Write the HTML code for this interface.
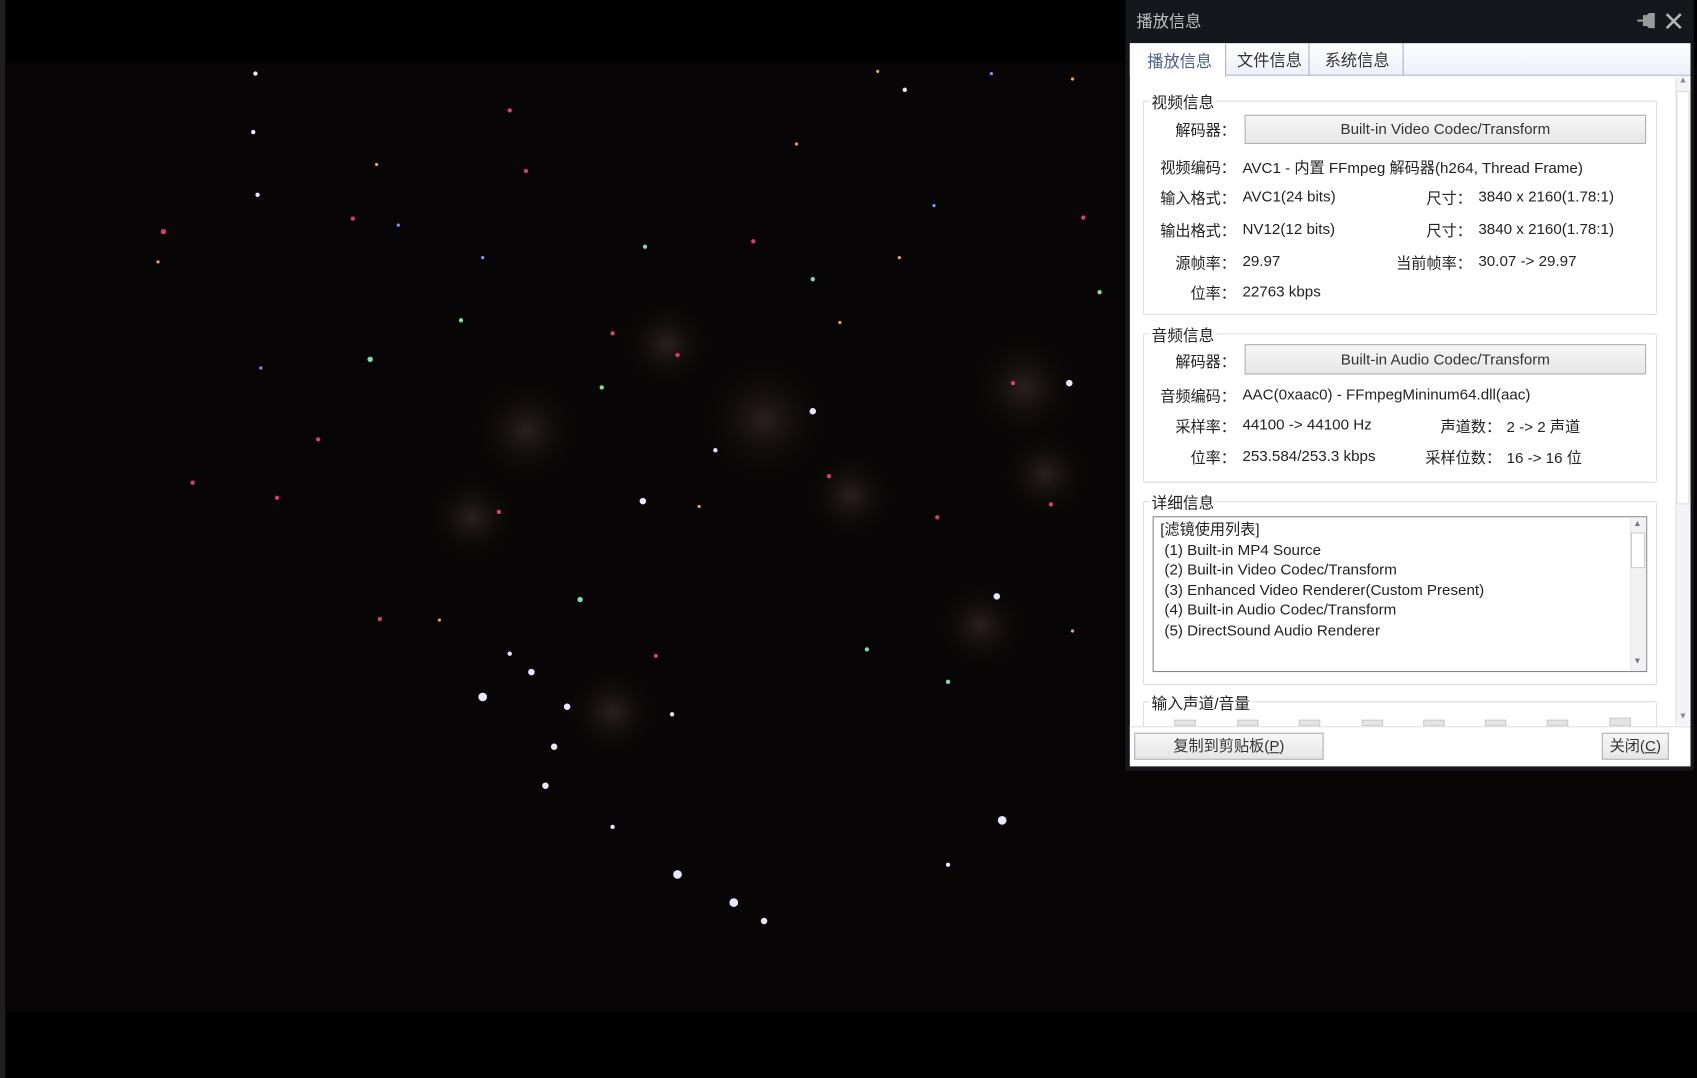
<!DOCTYPE html>
<html><head><meta charset="utf-8"><style>
*{margin:0;padding:0;box-sizing:border-box}
html,body{width:1697px;height:1078px;overflow:hidden;background:#000}
#w{position:absolute;left:0;top:0;width:1568px;height:996px;transform:scale(1.08227);transform-origin:0 0;font-family:"Liberation Sans","Noto Sans CJK SC",sans-serif;font-size:14px;color:#222}
.a{position:absolute;white-space:nowrap}
.r{text-align:right}
.grp{position:absolute;border:1px solid #dcdcdc;border-radius:2px}
.gl{position:absolute;background:#fff;padding:0 2px;font-size:14.5px;color:#222}
.btn{position:absolute;border:1px solid #adadad;background:linear-gradient(#f7f7f7,#e6e6e6);text-align:center;color:#333}
</style></head><body><div id="w">
<div class="a" style="left:0;top:0;width:5px;height:996px;background:#1e1e1e"></div>
<div class="a" style="left:6px;top:58px;width:1562px;height:877px;background:#070505"></div>
<svg class="a" style="left:6px;top:58px" width="1562" height="877">
<defs><radialGradient id="s"><stop offset="0" stop-color="#3a2a2a" stop-opacity=".7"/><stop offset="1" stop-color="#000" stop-opacity="0"/></radialGradient></defs>
<g fill="url(#s)"><circle cx="480" cy="340" r="60"/><circle cx="700" cy="330" r="70"/><circle cx="780" cy="400" r="50"/><circle cx="940" cy="300" r="60"/><circle cx="610" cy="260" r="50"/><circle cx="430" cy="420" r="50"/><circle cx="960" cy="380" r="50"/><circle cx="560" cy="600" r="50"/><circle cx="900" cy="520" r="50"/></g>
<g fill="#d04070"><circle cx="145" cy="156" r="2.5"/><circle cx="465" cy="44" r="2"/><circle cx="480" cy="100" r="2"/><circle cx="320" cy="144" r="2"/><circle cx="690" cy="165" r="2"/><circle cx="620" cy="270" r="2"/><circle cx="560" cy="250" r="2"/><circle cx="250" cy="402" r="2"/><circle cx="455" cy="415" r="2"/><circle cx="760" cy="382" r="2"/><circle cx="965" cy="408" r="2"/><circle cx="995" cy="143" r="2"/><circle cx="345" cy="514" r="2"/><circle cx="600" cy="548" r="2"/><circle cx="930" cy="296" r="2"/><circle cx="172" cy="388" r="2"/><circle cx="860" cy="420" r="2"/><circle cx="288" cy="348" r="2"/></g>
<g fill="#7fe0a0"><circle cx="336" cy="274" r="2.5"/><circle cx="590" cy="170" r="2"/><circle cx="745" cy="200" r="2"/><circle cx="530" cy="496" r="2.5"/><circle cx="870" cy="572" r="2"/><circle cx="795" cy="542" r="2"/><circle cx="550" cy="300" r="2"/><circle cx="1010" cy="212" r="2"/><circle cx="420" cy="238" r="2"/></g>
<g fill="#e8e8ff"><circle cx="982" cy="296" r="3"/><circle cx="745" cy="322" r="3"/><circle cx="588" cy="405" r="3"/><circle cx="440" cy="586" r="4"/><circle cx="485" cy="563" r="3"/><circle cx="518" cy="595" r="3"/><circle cx="506" cy="632" r="3"/><circle cx="498" cy="668" r="3"/><circle cx="620" cy="750" r="4"/><circle cx="672" cy="776" r="4"/><circle cx="700" cy="793" r="3"/><circle cx="920" cy="700" r="4"/><circle cx="870" cy="741" r="2"/><circle cx="655" cy="358" r="2"/><circle cx="915" cy="493" r="3"/><circle cx="228" cy="64" r="2"/><circle cx="232" cy="122" r="2"/><circle cx="615" cy="602" r="2"/><circle cx="560" cy="706" r="2"/><circle cx="230" cy="10" r="2"/><circle cx="830" cy="25" r="2"/><circle cx="465" cy="546" r="2"/></g>
<g fill="#e8a060"><circle cx="342" cy="94" r="1.5"/><circle cx="730" cy="75" r="1.5"/><circle cx="825" cy="180" r="1.5"/><circle cx="770" cy="240" r="1.5"/><circle cx="640" cy="410" r="1.5"/><circle cx="400" cy="515" r="1.5"/><circle cx="985" cy="525" r="1.5"/><circle cx="140" cy="184" r="1.5"/><circle cx="805" cy="8" r="1.5"/><circle cx="985" cy="15" r="1.5"/></g>
<g fill="#8090ff"><circle cx="235" cy="282" r="1.5"/><circle cx="362" cy="150" r="1.5"/><circle cx="857" cy="132" r="1.5"/><circle cx="440" cy="180" r="1.5"/><circle cx="910" cy="10" r="1.5"/></g>
</svg>
<!-- panel -->
<div class="a" style="left:1040px;top:0;width:525px;height:712px;background:#16171c"></div>
<div class="a" style="left:1050px;top:9px;font-size:15px;color:#bfbfbf">播放信息</div>
<svg class="a" style="left:1512px;top:11px" width="18" height="16"><path d="M1 8h6M7 4h3l2-2h4v12h-4l-2-2H7z" fill="#9a9a9a" stroke="#9a9a9a" stroke-width="2"/></svg>
<svg class="a" style="left:1538px;top:11px" width="17" height="17"><path d="M2 2l13 13M15 2L2 15" stroke="#b5b5b5" stroke-width="2.4"/></svg>
<div class="a" style="left:1044px;top:40px;width:518px;height:668px;background:#fff"></div>
<div class="a" style="left:1044px;top:40px;width:518px;height:30px;background:linear-gradient(#fff,#eef0f8);border-bottom:1px solid #b0b0c8"></div>
<div class="a" style="left:1044px;top:40px;width:89px;height:31px;background:#fff;border-right:1px solid #b0b0c8"></div>
<div class="a" style="left:1133px;top:40px;width:77px;height:30px;border-right:1px solid #b0b0c8"></div>
<div class="a" style="left:1210px;top:40px;width:87px;height:30px;border-right:1px solid #b0b0c8"></div>
<div class="a" style="left:1060px;top:46px;font-size:15px;color:#4a5f8e">播放信息</div>
<div class="a" style="left:1143px;top:45px;font-size:15px;color:#333">文件信息</div>
<div class="a" style="left:1224px;top:45px;font-size:15px;color:#333">系统信息</div>
<div class="a" style="left:1548px;top:70px;width:13px;height:600px;background:#f4f4f4;border-left:1px solid #e4e4e4"></div>
<div class="a" style="left:1549px;top:84px;width:12px;height:382px;background:#fff;border:1px solid #ddd"></div>
<div class="a" style="left:1551px;top:69px;font-size:8px;color:#888">▲</div>
<div class="a" style="left:1551px;top:657px;font-size:8px;color:#888">▼</div>

<div class="grp" style="left:1056px;top:93px;width:475px;height:198px"></div>
<div class="gl" style="left:1062px;top:84px">视频信息</div>
<div class="a r" style="left:1040px;top:110px;width:102px">解码器：</div>
<div class="btn" style="left:1150px;top:106px;width:371px;height:27px;line-height:25px">Built-in Video Codec/Transform</div>
<div class="a r" style="left:1040px;top:145px;width:102px">视频编码：</div><div class="a" style="left:1148px;top:145px">AVC1 - 内置 FFmpeg 解码器(h264, Thread Frame)</div>
<div class="a r" style="left:1040px;top:173px;width:102px">输入格式：</div><div class="a" style="left:1148px;top:173px">AVC1(24 bits)</div>
<div class="a r" style="left:1250px;top:173px;width:110px">尺寸：</div><div class="a" style="left:1366px;top:173px">3840 x 2160(1.78:1)</div>
<div class="a r" style="left:1040px;top:203px;width:102px">输出格式：</div><div class="a" style="left:1148px;top:203px">NV12(12 bits)</div>
<div class="a r" style="left:1250px;top:203px;width:110px">尺寸：</div><div class="a" style="left:1366px;top:203px">3840 x 2160(1.78:1)</div>
<div class="a r" style="left:1040px;top:233px;width:102px">源帧率：</div><div class="a" style="left:1148px;top:233px">29.97</div>
<div class="a r" style="left:1250px;top:233px;width:110px">当前帧率：</div><div class="a" style="left:1366px;top:233px">30.07 -&gt; 29.97</div>
<div class="a r" style="left:1040px;top:261px;width:102px">位率：</div><div class="a" style="left:1148px;top:261px">22763 kbps</div>

<div class="grp" style="left:1056px;top:308px;width:475px;height:138px"></div>
<div class="gl" style="left:1062px;top:299px">音频信息</div>
<div class="a r" style="left:1040px;top:324px;width:102px">解码器：</div>
<div class="btn" style="left:1150px;top:318px;width:371px;height:28px;line-height:26px">Built-in Audio Codec/Transform</div>
<div class="a r" style="left:1040px;top:356px;width:102px">音频编码：</div><div class="a" style="left:1148px;top:356px">AAC(0xaac0) - FFmpegMininum64.dll(aac)</div>
<div class="a r" style="left:1040px;top:384px;width:102px">采样率：</div><div class="a" style="left:1148px;top:384px">44100 -&gt; 44100 Hz</div>
<div class="a r" style="left:1270px;top:384px;width:117px">声道数：</div><div class="a" style="left:1392px;top:384px">2 -&gt; 2 声道</div>
<div class="a r" style="left:1040px;top:413px;width:102px">位率：</div><div class="a" style="left:1148px;top:413px">253.584/253.3 kbps</div>
<div class="a r" style="left:1270px;top:413px;width:117px">采样位数：</div><div class="a" style="left:1392px;top:413px">16 -&gt; 16 位</div>

<div class="grp" style="left:1056px;top:463px;width:475px;height:170px"></div>
<div class="gl" style="left:1062px;top:454px">详细信息</div>
<div class="a" style="left:1065px;top:477px;width:457px;height:144px;border:1px solid #828790;background:#fff"></div>
<div class="a" style="left:1506px;top:478px;width:15px;height:142px;background:#f2f2f2;border-left:1px solid #e6e6e6"></div>
<div class="a" style="left:1507px;top:492px;width:13px;height:33px;background:#fff;border:1px solid #ccc"></div>
<div class="a" style="left:1509px;top:479px;font-size:8px;color:#777">▲</div>
<div class="a" style="left:1509px;top:606px;font-size:8px;color:#777">▼</div>
<div class="a" style="left:1072px;top:480px;line-height:18.6px;font-size:14px">[滤镜使用列表]<br>&nbsp;(1) Built-in MP4 Source<br>&nbsp;(2) Built-in Video Codec/Transform<br>&nbsp;(3) Enhanced Video Renderer(Custom Present)<br>&nbsp;(4) Built-in Audio Codec/Transform<br>&nbsp;(5) DirectSound Audio Renderer</div>

<div class="grp" style="left:1056px;top:648px;width:475px;height:40px"></div>
<div class="gl" style="left:1062px;top:639px">输入声道/音量</div>
<div class="a" style="left:1085px;top:665px;width:20px;height:6px;background:#e4e4e4;border:1px solid #ccc"></div>
<div class="a" style="left:1143px;top:665px;width:20px;height:6px;background:#e4e4e4;border:1px solid #ccc"></div>
<div class="a" style="left:1200px;top:665px;width:20px;height:6px;background:#e4e4e4;border:1px solid #ccc"></div>
<div class="a" style="left:1258px;top:665px;width:20px;height:6px;background:#e4e4e4;border:1px solid #ccc"></div>
<div class="a" style="left:1315px;top:665px;width:20px;height:6px;background:#e4e4e4;border:1px solid #ccc"></div>
<div class="a" style="left:1372px;top:665px;width:20px;height:6px;background:#e4e4e4;border:1px solid #ccc"></div>
<div class="a" style="left:1429px;top:665px;width:20px;height:6px;background:#e4e4e4;border:1px solid #ccc"></div>
<div class="a" style="left:1487px;top:663px;width:20px;height:8px;background:#e4e4e4;border:1px solid #ccc"></div>
<div class="a" style="left:1044px;top:671px;width:518px;height:37px;background:#fff;border-top:1px solid #e0e0e0"></div>
<div class="btn" style="left:1048px;top:677px;width:175px;height:25px;line-height:23px">复制到剪贴板(<u>P</u>)</div>
<div class="btn" style="left:1480px;top:677px;width:62px;height:25px;line-height:23px">关闭(<u>C</u>)</div>
</div></body></html>
